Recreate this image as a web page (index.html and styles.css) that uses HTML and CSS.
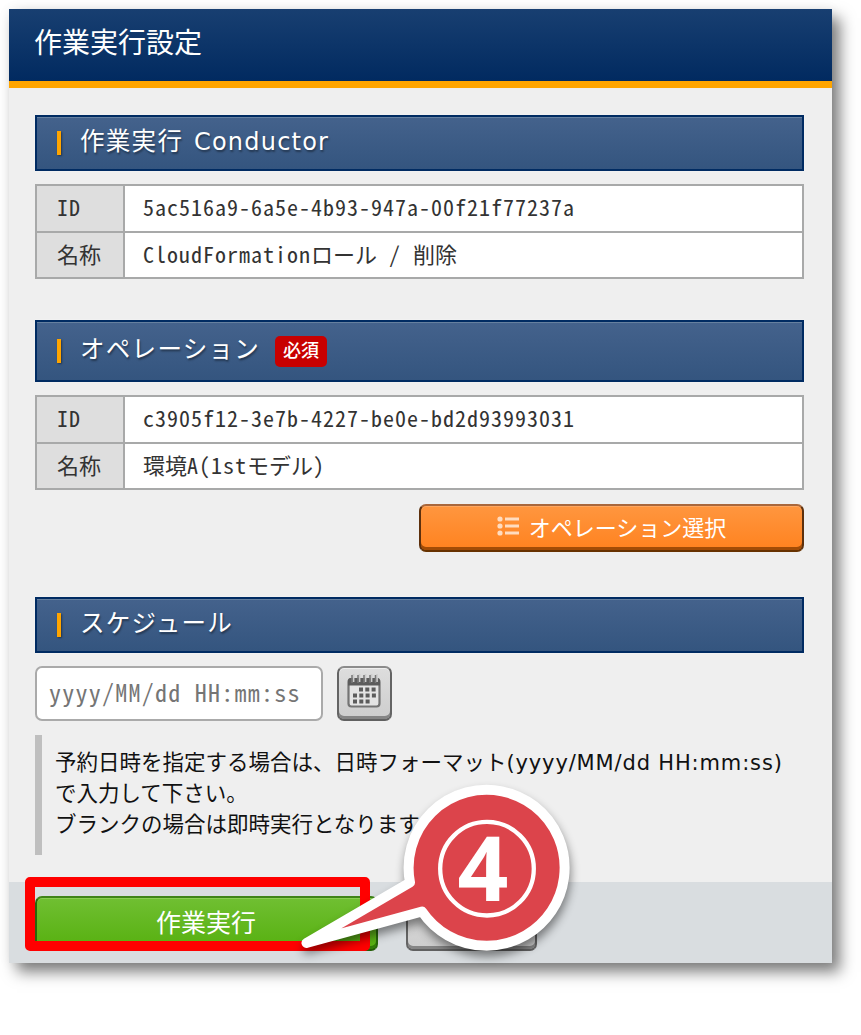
FILE: index.html
```html
<!DOCTYPE html>
<html lang="ja">
<head>
<meta charset="utf-8">
<title>作業実行設定</title>
<link rel="stylesheet" href="styles.css">
</head>
<body>
<main class="dialog">
  <header class="dialog-header"><h1 class="dialog-title">作業実行設定</h1></header>
  <div class="dialog-body">
    <h2 class="section-title"><span class="section-title-text">作業実行</span> Conductor</h2>
    <dl class="info">
      <div class="info-row"><dt>ID</dt><dd>5ac516a9-6a5e-4b93-947a-00f21f77237a</dd></div>
      <div class="info-row"><dt class="cjk">名称</dt><dd>CloudFormation<span class="cjk">ロール</span> / <span class="cjk">削除</span></dd></div>
    </dl>
    <h2 class="section-title section-title-tall"><span class="section-title-text">オペレーション</span><span class="required">必須</span></h2>
    <dl class="info">
      <div class="info-row"><dt>ID</dt><dd>c3905f12-3e7b-4227-be0e-bd2d93993031</dd></div>
      <div class="info-row"><dt class="cjk">名称</dt><dd><span class="cjk">環境</span>A(1st<span class="cjk">モデル</span>)</dd></div>
    </dl>
    <button class="button button-select" type="button">
      <svg class="list-icon" viewBox="0 0 22 20"><g fill="currentColor"><circle cx="3" cy="3" r="2.6"/><circle cx="3" cy="10" r="2.6"/><circle cx="3" cy="17" r="2.6"/><path d="M8 1.5h14v3H8zM8 8.5h14v3H8zM8 15.5h14v3H8z"/></g></svg>
      <span>オペレーション選択</span>
    </button>
    <h2 class="section-title"><span class="section-title-text">スケジュール</span></h2>
    <div class="schedule">
      <input class="date-input" type="text" placeholder="yyyy/MM/dd HH:mm:ss">
      <button class="button button-calendar" type="button" aria-label="calendar">
        <svg class="calendar-icon" viewBox="0 0 34 34">
          <rect x="1.500" y="5" width="31" height="27.500" rx="3" fill="#e4e4e4" stroke="#747474" stroke-width="2.200"/>
          <path d="M1 11.500V7q0-3 3-3h26q3 0 3 3v4.500z" fill="#5c5c5c"/>
          <path d="M6.500 0v8M12.500 0v8M18.500 0v8M24.500 0v8M30 0v8" stroke="#ccc" stroke-width="1.800"/>
          <path d="M5 1v8M11 1v8M17 1v8M23 1v8M28.500 1v8" stroke="#777" stroke-width="1.500"/>
          <path d="M12 15.500h17M6 21.500h23M6 27.500h17" stroke="#5c5c5c" stroke-width="3.800" stroke-dasharray="4 2.300"/>
        </svg>
      </button>
    </div>
    <p class="note">予約日時を指定する場合は、日時フォーマット<span class="note-format">(yyyy/MM/dd HH:mm:ss)</span><br>で入力して下さい。<br>ブランクの場合は即時実行となります</p>
  </div>
  <footer class="dialog-footer">
    <button class="button button-run" type="button">作業実行</button>
    <button class="button button-close" type="button" aria-label="close"></button>
  </footer>
</main>
<svg class="callout" viewBox="0 0 861 1035">
  <rect x="30" y="882" width="335" height="64" fill="none" stroke="#f00" stroke-width="10" stroke-linejoin="round"/>
  <g class="callout-balloon">
    <path d="M306.500 943L410 882.500A78 78 0 1 1 422 911.500Z" fill="#dc444b" stroke="#fff" stroke-width="10" stroke-linejoin="round"/>
  </g>
  <circle cx="487" cy="868.700" r="46.800" fill="none" stroke="#fff" stroke-width="4.300"/>
  <text class="callout-number" x="483" y="901" text-anchor="middle">4</text>
</svg>
</body>
</html>
```
FILE: styles.css
```css
* { box-sizing: border-box; }
body {
  margin: 0;
  width: 861px;
  height: 1035px;
  padding: 9px;
  overflow: hidden;
  position: relative;
  background: #fff;
  font-family: "DejaVu Sans", "Noto Sans CJK JP", sans-serif;
}
.dialog {
  display: flex;
  flex-direction: column;
  width: 823px;
  height: 954px;
  background: #efefef;
  box-shadow: 8px 9px 14px rgba(0, 0, 0, .5), 0 0 12px rgba(0, 0, 0, .06);
}
.dialog-header {
  height: 79px;
  padding: 0 25px;
  background: linear-gradient(#183f71, #012a60);
  border-bottom: 7px solid #ffa500;
}
.dialog-title {
  margin: 0;
  color: #fff;
  font-family: "Noto Sans CJK JP", sans-serif;
  font-size: 28px;
  font-weight: 400;
  line-height: 64px;
}
.dialog-body {
  flex: 1;
  padding: 27px 28px 0 26px;
}
.section-title {
  display: flex;
  align-items: center;
  height: 56px;
  margin: 0 0 13px;
  padding: 0 20px 3px;
  border: 2px solid #002b62;
  background: linear-gradient(#44628c, #34557f);
  box-shadow: inset 0 1px #66809f, 0 0 1px #fff;
  color: #fff;
  font-size: 24px;
  font-weight: 400;
  letter-spacing: 1.2px;
  word-spacing: 2px;
  line-height: 36px;
  white-space: pre;
  text-shadow: 1px 2px 2px rgba(0, 0, 0, .4);
}
.section-title::before {
  content: "";
  width: 4px;
  height: 24px;
  margin: 2px 19px 0 0;
  background: #ffa500;
  box-shadow: 1px 1px 2px rgba(0, 0, 0, .4);
}
.section-title-text { font-size: 24.5px; letter-spacing: 1.3px; }
.section-title-tall { height: 62px; }
.required {
  width: 52px;
  height: 31px;
  margin: 3px 0 0 15px;
  border-radius: 5px;
  background: #c80000;
  font-size: 18px;
  font-weight: 500;
  line-height: 29px;
  letter-spacing: 0;
  text-align: center;
  text-shadow: none;
}
.info {
  height: 95px;
  margin: 0 0 41px;
  display: grid;
  grid-template-rows: 1fr 1fr;
  gap: 2px;
  padding: 2px;
  background: #a8a9a9;
  color: #333;
  font-family: "Noto Sans CJK JP", monospace;
  font-size: 22px;
  font-feature-settings: "hwid";
  letter-spacing: 1px;
}
.info-row {
  display: grid;
  grid-template-columns: 86px 1fr;
  gap: 2px;
  min-height: 0;
  line-height: 40px;
}
.info dt { padding-left: 20px; background: #dedede; }
.info dd { margin: 0; padding-left: 18px; background: #fff; white-space: pre; overflow: hidden; }
.info .cjk { letter-spacing: 0; }
.section-title-tall + .info { margin-bottom: 14px; }
.button {
  display: flex;
  align-items: center;
  justify-content: center;
  margin: 0;
  padding: 0;
  border: 2px solid;
  border-radius: 7px;
  font-family: "Noto Sans CJK JP", sans-serif;
}
.button-select {
  width: 385px;
  height: 48px;
  margin: 0 0 45px auto;
  gap: 10px;
  border-color: #a9673c #5d300d #673200;
  background: linear-gradient(#ff963f, #ff821f);
  box-shadow: inset 0 -3px #a24c06, inset 0 1px #ffa65e;
  color: #fff;
  font-size: 22px;
  padding-bottom: 5px;
}
.list-icon { width: 22px; height: 20px; color: #ffdcc0; }
.schedule { display: flex; gap: 14px; }
.date-input {
  width: 288px;
  height: 55px;
  padding: 0 12px 4px;
  border: 2px solid #aaa;
  border-radius: 7px;
  background: #fff;
  font: 24px "Noto Sans CJK JP", monospace;
  font-feature-settings: "hwid";
  letter-spacing: 1.25px;
}
.date-input::placeholder { color: #757575; opacity: 1; }
.button-calendar, .button-close {
  width: 55px;
  height: 55px;
  border-color: #8c8c8c #646464 #606060;
  background: linear-gradient(#ddd, #cdcdcd);
  box-shadow: inset 0 -3px #858585, inset 0 1px #eee;
}
.button-calendar { padding: 0 2px 5px 0; }
.calendar-icon { width: 34px; height: 34px; }
.note {
  height: 120px;
  margin: 14px 0 0;
  padding: 10px 0 0 13px;
  border-left: 7px solid #bfbfbf;
  color: #111;
  font-family: "Noto Sans CJK JP", sans-serif;
  font-size: 21.5px;
  line-height: 31px;
  white-space: nowrap;
}
.note-format { font-family: "DejaVu Sans", sans-serif; font-size: 21px; letter-spacing: .85px; line-height: 1; }
.dialog-footer {
  display: flex;
  gap: 28px;
  height: 81px;
  padding: 14px 26px 0;
  background: #d9dde0;
}
.button-run {
  width: 343px;
  height: 55px;
  border-color: #3f8417 #28680a #235c05;
  background: linear-gradient(#70bf32, #56b00f);
  box-shadow: inset 0 -3px #327c08, inset 0 1px #89ce51;
  color: #fff;
  font-size: 25px;
  padding: 0 1px 6px 0;
}
.button-close { width: 131px; }
.callout {
  position: absolute;
  left: 0;
  top: 0;
  width: 861px;
  height: 1035px;
}
.callout-balloon { filter: drop-shadow(1px 6px 5px rgba(0, 0, 0, .45)); }
.callout-number { fill: #fff; font-family: "Noto Sans", sans-serif; font-size: 89px; font-weight: 700; }
```
